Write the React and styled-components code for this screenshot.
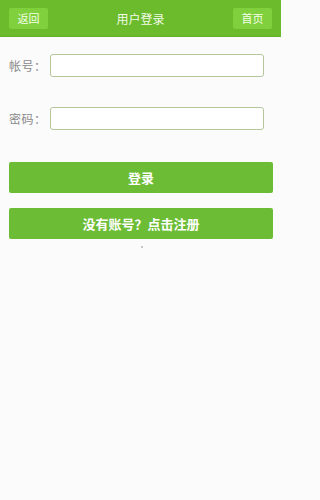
import React from 'react';
import styled, { createGlobalStyle } from 'styled-components';

const GlobalStyle = createGlobalStyle`
  * { box-sizing: border-box; }
  body {
    margin: 0;
    background: #fbfbfb;
    font-family: "Noto Sans CJK SC", "Liberation Sans", sans-serif;
  }
`;

const Page = styled.div`
  width: 281px;
  min-height: 500px;
  background: #fbfbfb;
`;

const Header = styled.header`
  height: 37px;
  background: #6bbb2d;
  border-bottom: 1px solid #63b126;
  display: flex;
  align-items: center;
  justify-content: space-between;
  padding: 0 9px;
`;

const HeadButton = styled.a`
  width: 39px;
  height: 21px;
  border-radius: 2px;
  background: #80cf3c;
  color: #f4ffe9;
  font-size: 11px;
  display: flex;
  align-items: center;
  justify-content: center;
  text-decoration: none;
`;

const Title = styled.h1`
  margin: 0;
  font-size: 12px;
  font-weight: normal;
  color: #f2fbe8;
`;

const Form = styled.form`
  display: flex;
  flex-direction: column;
  padding: 17px 9px 0 9px;
`;

const Field = styled.div`
  display: flex;
  align-items: center;
  height: 23px;
  margin-bottom: ${({ $gap }) => $gap || 0}px;
`;

const Label = styled.label`
  width: 41px;
  font-size: 12px;
  color: #8a8a8a;
  letter-spacing: 0.5px;
`;

const Input = styled.input`
  width: 214px;
  height: 23px;
  border: 1px solid #b4c79b;
  border-radius: 3px;
  background: #fff;
  outline: none;
`;

const Button = styled.button`
  width: 264px;
  height: 31px;
  border: none;
  border-radius: 2px;
  background: #6cbd35;
  color: #fff;
  font-size: 13px;
  font-weight: bold;
  font-family: inherit;
  margin-top: ${({ $top }) => $top}px;
`;

const Dot = styled.div`
  width: 2px;
  height: 2px;
  background: #c8c8c8;
  margin: 7px auto 0 132px;
`;

export default function App() {
  return (
    <Page>
      <GlobalStyle />
      <Header>
        <HeadButton href="#">返回</HeadButton>
        <Title>用户登录</Title>
        <HeadButton href="#">首页</HeadButton>
      </Header>
      <Form>
        <Field $gap={30}>
          <Label>帐号：</Label>
          <Input type="text" />
        </Field>
        <Field>
          <Label>密码：</Label>
          <Input type="password" />
        </Field>
        <Button type="button" $top={32}>登录</Button>
        <Button type="button" $top={15}>没有账号？点击注册</Button>
        <Dot />
      </Form>
    </Page>
  );
}
